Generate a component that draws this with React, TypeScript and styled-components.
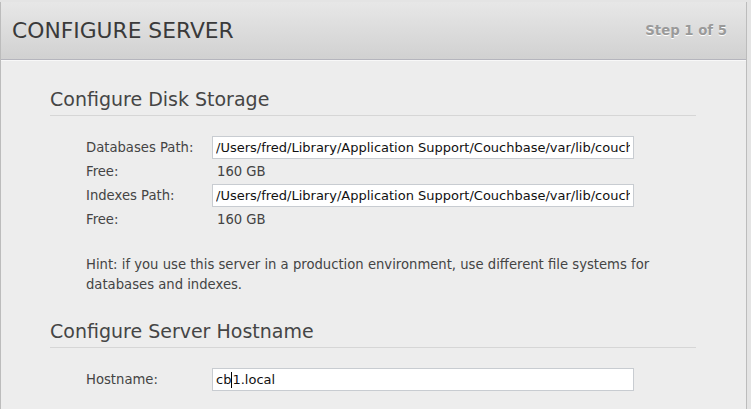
import React, { FC } from "react";
import styled, { createGlobalStyle } from "styled-components";

const GlobalStyle = createGlobalStyle`
  html, body {
    margin: 0;
    padding: 0;
    background: #e4e4e4;
    font-family: "DejaVu Sans", Verdana, sans-serif;
  }
`;

const Window = styled.div`
  width: 745px;
  height: 407px;
  margin-top: 2px;
  border-left: 1px solid #bcbcbc;
  border-right: 1px solid #bcbcbc;
  background: #ededed;
  overflow: hidden;
`;

const Header = styled.div`
  height: 57px;
  display: flex;
  align-items: center;
  justify-content: space-between;
  padding: 0 19px 0 11px;
  background: linear-gradient(#e7e7e7, #d1d1d1);
  border-bottom: 1px solid #b5b5bd;
`;

const Title = styled.h1`
  margin: 0;
  font-size: 21.8px;
  font-weight: normal;
  color: #3a3a3a;
  letter-spacing: 0;
`;

const Step = styled.span`
  font-size: 13.3px;
  font-weight: bold;
  color: #9a9a9a;
  text-shadow: 0 1px 0 #fff;
`;

const Body = styled.div`
  border-top: 1px solid #f8f8f8;
  padding: 26px 50px 0 49px;
`;

const SectionTitle = styled.h2<{ $first?: boolean }>`
  margin: ${(p) => (p.$first ? "0" : "24px")} 0 0;
  font-size: 19px;
  font-weight: normal;
  line-height: 24px;
  color: #454545;
  padding-bottom: 4px;
  border-bottom: 1px solid #d6d6d6;
`;

const FormGrid = styled.div`
  margin-top: 20px;
  padding-left: 36px;
  display: grid;
  grid-template-columns: 126px 422px;
  grid-auto-rows: 24px;
  font-size: 13.2px;
  color: #444;
`;

const Label = styled.div`
  display: flex;
  align-items: center;
  height: 23px;
`;

const Value = styled.div`
  display: flex;
  align-items: center;
  height: 23px;
  padding-left: 5px;
`;

const PathInput = styled.input`
  box-sizing: border-box;
  width: 422px;
  height: 23px;
  margin: 0;
  padding: 0 3px;
  border: 1px solid #c8ccd1;
  background: #fff;
  font-family: "DejaVu Sans", Verdana, sans-serif;
  font-size: 13px;
  color: #111;
  outline: none;
`;

const Field = styled.div`
  box-sizing: border-box;
  width: 422px;
  height: 23px;
  padding: 0 3px;
  border: 1px solid #c8ccd1;
  background: #fff;
  display: flex;
  align-items: center;
  font-size: 13px;
  color: #111;
  white-space: pre;
`;

const Caret = styled.span`
  display: inline-block;
  width: 1px;
  height: 16px;
  background: #000;
`;

const Hint = styled.p`
  margin: 23px 0 0;
  padding-left: 36px;
  font-size: 13.2px;
  line-height: 20px;
  color: #444;
`;

const diskPath = "/Users/fred/Library/Application Support/Couchbase/var/lib/couchbase/data";
const indexPath = "/Users/fred/Library/Application Support/Couchbase/var/lib/couchbase/data";

const App: FC = () => {
  return (
    <>
      <GlobalStyle />
      <Window>
        <Header>
          <Title>CONFIGURE SERVER</Title>
          <Step>Step 1 of 5</Step>
        </Header>
        <Body>
          <SectionTitle $first>Configure Disk Storage</SectionTitle>
          <FormGrid>
            <Label>Databases Path:</Label>
            <PathInput defaultValue={diskPath} />
            <Label>Free:</Label>
            <Value>160 GB</Value>
            <Label>Indexes Path:</Label>
            <PathInput defaultValue={indexPath} />
            <Label>Free:</Label>
            <Value>160 GB</Value>
          </FormGrid>
          <Hint>
            Hint: if you use this server in a production environment, use different file systems for
            <br />
            databases and indexes.
          </Hint>
          <SectionTitle>Configure Server Hostname</SectionTitle>
          <FormGrid>
            <Label>Hostname:</Label>
            <Field>
              cb<Caret />1.local
            </Field>
          </FormGrid>
        </Body>
      </Window>
    </>
  );
};

export default App;
